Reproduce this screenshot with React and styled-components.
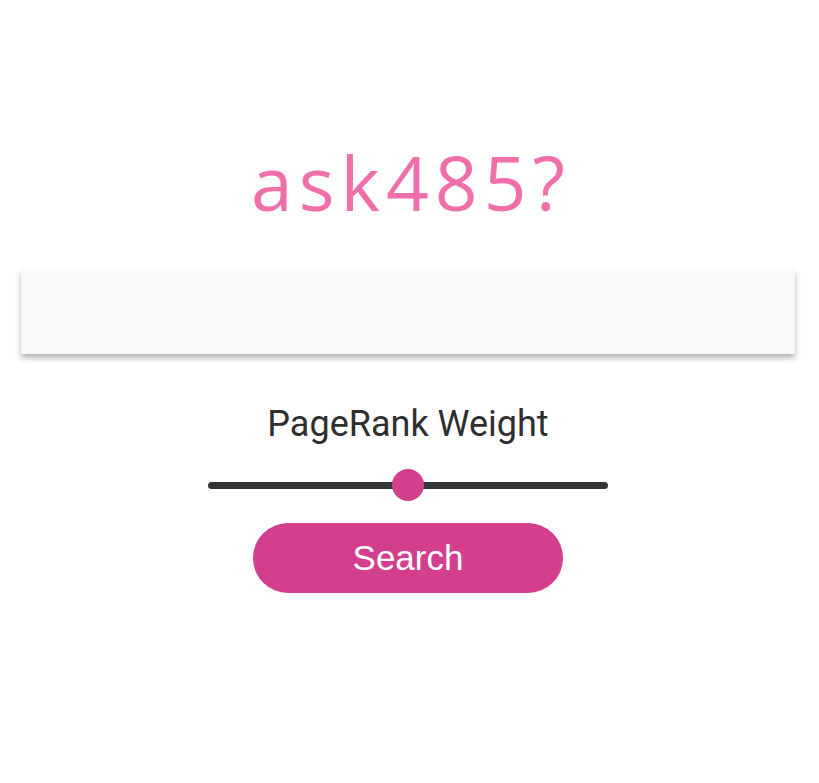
import styled, { createGlobalStyle } from "styled-components";

const GlobalStyle = createGlobalStyle`
  html, body {
    margin: 0;
    padding: 0;
    background: #ffffff;
  }
  body {
    font-family: "Roboto", "Liberation Sans", sans-serif;
  }
`;

const Page = styled.div`
  width: 100%;
  min-height: 783px;
  display: flex;
  flex-direction: column;
  align-items: center;
  padding: 130px 3px 0 0;
  box-sizing: border-box;
`;

const Title = styled.h1`
  margin: 0;
  padding-left: 6px;
  font-family: "Open Sans", "DejaVu Sans", sans-serif;
  font-weight: 400;
  font-size: 75px;
  line-height: 104px;
  color: #f06eaa;
  letter-spacing: 6px;
`;

const SearchBox = styled.input`
  margin-top: 36px;
  width: 774px;
  height: 84px;
  box-sizing: border-box;
  border: none;
  outline: none;
  background: #f8f8f8;
  box-shadow: 0 4px 6px rgba(0, 0, 0, 0.3);
  font-size: 28px;
  padding: 0 20px;
`;

const Label = styled.div`
  margin-top: 49px;
  font-family: "Roboto", sans-serif;
  font-size: 36px;
  color: #2f2f2f;
  line-height: 42px;
`;

const Slider = styled.input`
  -webkit-appearance: none;
  appearance: none;
  margin: 24px 0 0;
  width: 400px;
  height: 32px;
  background: transparent;
  outline: none;

  &::-webkit-slider-runnable-track {
    height: 7px;
    border-radius: 4px;
    background: #353535;
  }
  &::-webkit-slider-thumb {
    -webkit-appearance: none;
    appearance: none;
    width: 32px;
    height: 32px;
    border-radius: 50%;
    background: #d33f8d;
    margin-top: -12.5px;
    border: none;
  }
`;

const Button = styled.button`
  margin-top: 22px;
  width: 310px;
  height: 70px;
  border: none;
  border-radius: 35px;
  background: #d33f8d;
  color: #ffffff;
  font-family: "Liberation Sans", Arial, sans-serif;
  font-size: 35px;
  cursor: pointer;
`;

export default function App() {
  return (
    <>
      <GlobalStyle />
      <Page>
        <Title>ask485?</Title>
        <SearchBox type="text" />
        <Label>PageRank Weight</Label>
        <Slider type="range" min="0" max="1" step="0.01" defaultValue="0.5" />
        <Button>Search</Button>
      </Page>
    </>
  );
}
